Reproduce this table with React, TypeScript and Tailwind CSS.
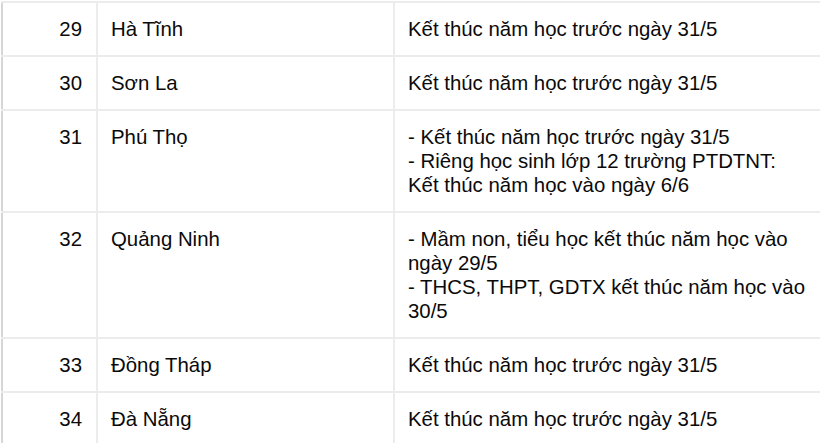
const rows: { no: number; name: string; lines: string[] }[] = [
  { no: 29, name: "Hà Tĩnh", lines: ["Kết thúc năm học trước ngày 31/5"] },
  { no: 30, name: "Sơn La", lines: ["Kết thúc năm học trước ngày 31/5"] },
  {
    no: 31,
    name: "Phú Thọ",
    lines: [
      "- Kết thúc năm học trước ngày 31/5",
      "- Riêng học sinh lớp 12 trường PTDTNT:",
      "Kết thúc năm học vào ngày 6/6",
    ],
  },
  {
    no: 32,
    name: "Quảng Ninh",
    lines: [
      "- Mầm non, tiểu học kết thúc năm học vào",
      "ngày 29/5",
      "- THCS, THPT, GDTX kết thúc năm học vào",
      "30/5",
    ],
  },
  { no: 33, name: "Đồng Tháp", lines: ["Kết thúc năm học trước ngày 31/5"] },
  { no: 34, name: "Đà Nẵng", lines: ["Kết thúc năm học trước ngày 31/5"] },
];

export default function App() {
  return (
    <div className="w-[820px] h-[443px] overflow-hidden bg-white pl-[1px] pt-[1px] font-['Liberation_Sans',Arial,sans-serif] text-[20.4px] leading-[24px] text-[#0a0a0a]">
      <table className="w-[860px] border-collapse border-l-2 border-l-[#d6d6d6]">
        <tbody>
          {rows.map((r) => (
            <tr key={r.no} className="border-t-2 border-[#ececec] align-top">
              <td className="w-[95px] border-r-2 border-[#ececec] py-[14px] pr-[14px] text-right">
                {r.no}
              </td>
              <td className="w-[297px] border-r-2 border-[#ececec] py-[14px] pl-[13px]">
                {r.name}
              </td>
              <td className="whitespace-nowrap py-[14px] pl-[13px]">
                {r.lines.map((l, i) => (
                  <div key={i}>{l}</div>
                ))}
              </td>
            </tr>
          ))}
        </tbody>
      </table>
    </div>
  );
}
